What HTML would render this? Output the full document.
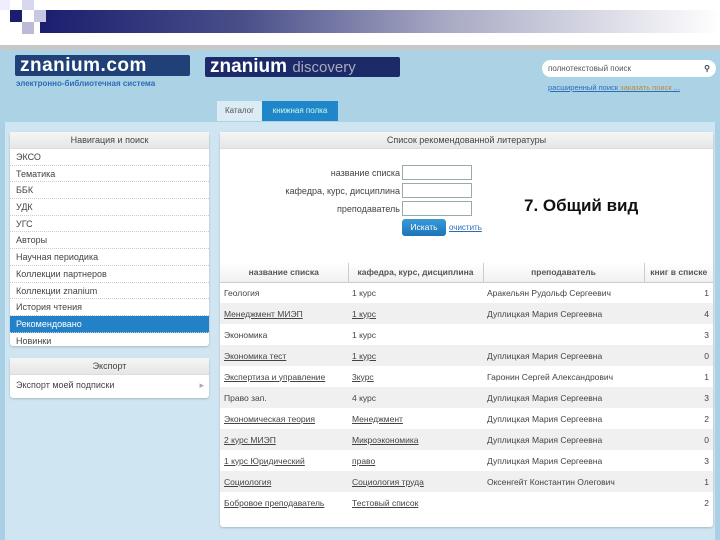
<!DOCTYPE html>
<html><head><meta charset="utf-8"><style>
*{margin:0;padding:0;box-sizing:border-box}
body{width:720px;height:540px;overflow:hidden;background:#a9d0e5;font-family:"Liberation Sans",sans-serif;position:relative;font-size:9px;color:#333}
.a{position:absolute}
.top{left:0;top:0;width:720px;height:45px;background:#fff}
.bar{left:40px;top:10px;width:680px;height:23px;background:linear-gradient(90deg,#1a1e6e 0%,#4a4f8a 30%,#a9aac4 60%,#fff 100%)}
.sep{left:0;top:45px;width:720px;height:5px;background:#c8c8c8}
.logo{background:#1f4178;color:#fff;font-weight:bold;font-size:19px;line-height:21px;border-radius:2px;padding-left:5px}
.panel{background:#fff;border-radius:3px;box-shadow:0 1px 2px rgba(0,0,0,.2)}
.ph{height:17px;background:linear-gradient(#f6f6f6,#e6e6e6);text-align:center;line-height:17px;color:#444;border-bottom:1px solid #ddd}
.item{height:16.7px;line-height:16px;padding-left:6px;border-bottom:1px dotted #ccc;color:#444}
.sel{background:#2382c7;color:#fff}
table{border-collapse:collapse;width:493px;font-size:8.5px}
td,th{height:21px;padding:0 4px;color:#444;text-align:left;font-weight:normal}
th{height:19px;text-align:center;border-right:1px solid #ccc;background:linear-gradient(#fff,#f0f0f0);border-bottom:1px solid #ccc;font-weight:bold;color:#555}
tr:nth-child(odd) td{background:#f0f0f0}
td:last-child{text-align:right}
u{text-decoration:underline}
.lab{width:180px;text-align:right;left:220px;color:#444}
.inp{left:402px;width:70px;height:15px;border:1px solid #9aa;background:#fff}
</style></head><body>
<div class="a top"></div>
<div class="a bar"></div>
<div class="a" style="left:10px;top:10px;width:12px;height:12px;background:#1a1e6e"></div>
<div class="a" style="left:22px;top:0;width:12px;height:10px;background:#d8d8ec"></div>
<div class="a" style="left:34px;top:10px;width:12px;height:12px;background:#c8c8e2"></div>
<div class="a" style="left:22px;top:22px;width:12px;height:12px;background:#bbbbd8"></div>
<div class="a" style="left:0;top:0;width:10px;height:10px;background:#eef"></div>
<div class="a sep"></div>
<div class="a" style="left:0;top:50px;width:720px;height:72px;background:#acd2e6"></div>
<div class="a logo" style="left:15px;top:55px;width:175px;height:21px;letter-spacing:0.5px">znanium.com</div>
<div class="a" style="left:16px;top:79px;font-size:8px;font-weight:bold;color:#2a6db5">электронно-библиотечная система</div>
<div class="a logo" style="left:205px;top:57px;width:195px;height:20px;line-height:20px;background:#1c2a6a">znanium <span style="font-weight:normal;font-size:15px;color:#aab">discovery</span></div>
<div class="a" style="left:542px;top:60px;width:174px;height:17px;background:#fff;border-radius:9px;font-size:8px;line-height:17px;padding-left:6px;color:#555">полнотекстовый поиск<span style="position:absolute;right:6px;color:#345;font-weight:bold">&#9906;</span></div>
<div class="a" style="left:548px;top:83px;font-size:7.5px;color:#2a6db5;text-decoration:underline">расширенный поиск <span style="color:#b68a3a">заказать поиск</span> ...</div>
<div class="a" style="left:217px;top:101px;width:45px;height:20px;background:#dcecf4;line-height:20px;text-align:center;color:#555;font-size:8px">Каталог</div>
<div class="a" style="left:262px;top:101px;width:76px;height:20px;background:#1f86c9;line-height:20px;text-align:center;color:#cfe;font-size:8px">книжная полка</div>
<div class="a" style="left:0;top:122px;width:720px;height:418px;background:#cfe5f1"></div>
<div class="a" style="left:0;top:122px;width:5px;height:418px;background:#a9d0e5"></div>
<div class="a" style="left:715px;top:122px;width:5px;height:418px;background:#a9d0e5"></div>
<div class="a panel" style="left:10px;top:132px;width:199px;height:214px">
<div class="ph">Навигация и поиск</div>
<div class="item">ЭКСО</div><div class="item">Тематика</div><div class="item">ББК</div><div class="item">УДК</div><div class="item">УГС</div><div class="item">Авторы</div><div class="item">Научная периодика</div><div class="item">Коллекции партнеров</div><div class="item">Коллекции znanium</div><div class="item">История чтения</div><div class="item sel">Рекомендовано</div><div class="item" style="border:none">Новинки</div>
</div>
<div class="a panel" style="left:10px;top:358px;width:199px;height:40px">
<div class="ph">Экспорт</div>
<div class="item" style="border:none;height:20px;line-height:20px">Экспорт моей подписки<span style="position:absolute;right:5px;color:#aaa">&#9656;</span></div>
</div>
<div class="a panel" style="left:220px;top:132px;width:493px;height:395px">
<div class="ph">Список рекомендованной литературы</div>
</div>
<div class="a lab" style="top:168px">название списка</div>
<div class="a lab" style="top:186px">кафедра, курс, дисциплина</div>
<div class="a lab" style="top:204px">преподаватель</div>
<div class="a inp" style="top:165px"></div>
<div class="a inp" style="top:183px"></div>
<div class="a inp" style="top:201px"></div>
<div class="a" style="left:402px;top:219px;width:44px;height:17px;background:linear-gradient(#3a9ad8,#1b74b8);border-radius:3px;color:#fff;text-align:center;line-height:17px;font-size:8.5px">Искать</div>
<div class="a" style="left:449px;top:223px;color:#2a6db5;text-decoration:underline;font-size:8px">очистить</div>
<div class="a" style="left:524px;top:196px;font-size:17px;font-weight:bold;color:#111">7. Общий вид</div>
<table class="a" style="left:220px;top:263px">
<tr><th style="width:128px">название списка</th><th style="width:135px">кафедра, курс, дисциплина</th><th style="width:161px">преподаватель</th><th style="border-right:none">книг в списке</th></tr>
<tr><td>Геология</td><td>1 курс</td><td>Аракельян Рудольф Сергеевич</td><td>1</td></tr>
<tr><td><u>Менеджмент МИЭП</u></td><td><u>1 курс</u></td><td>Дуплицкая Мария Сергеевна</td><td>4</td></tr>
<tr><td>Экономика</td><td>1 курс</td><td></td><td>3</td></tr>
<tr><td><u>Экономика тест</u></td><td><u>1 курс</u></td><td>Дуплицкая Мария Сергеевна</td><td>0</td></tr>
<tr><td><u>Экспертиза и управление</u></td><td><u>3курс</u></td><td>Гаронин Сергей Александрович</td><td>1</td></tr>
<tr><td>Право зап.</td><td>4 курс</td><td>Дуплицкая Мария Сергеевна</td><td>3</td></tr>
<tr><td><u>Экономическая теория</u></td><td><u>Менеджмент</u></td><td>Дуплицкая Мария Сергеевна</td><td>2</td></tr>
<tr><td><u>2 курс МИЭП</u></td><td><u>Микроэкономика</u></td><td>Дуплицкая Мария Сергеевна</td><td>0</td></tr>
<tr><td><u>1 курс Юридический</u></td><td><u>право</u></td><td>Дуплицкая Мария Сергеевна</td><td>3</td></tr>
<tr><td><u>Социология</u></td><td><u>Социология труда</u></td><td>Оксенгейт Константин Олегович</td><td>1</td></tr>
<tr><td><u>Бобровое преподаватель</u></td><td><u>Тестовый список</u></td><td></td><td>2</td></tr>
</table>
</body></html>
